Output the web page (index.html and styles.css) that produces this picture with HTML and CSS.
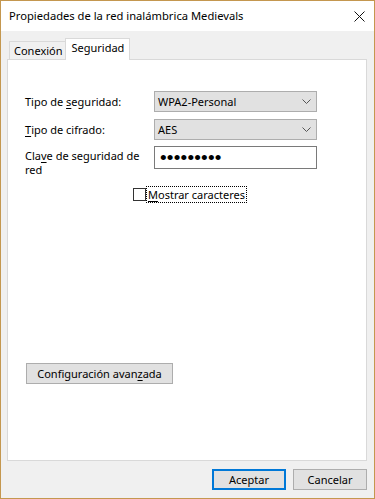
FILE: index.html
```html
<!DOCTYPE html>
<html lang="es">
<head>
    <meta charset="UTF-8">
    <meta name="viewport" content="width=device-width, initial-scale=1.0">
    <title>Propiedades de la red inalámbrica Medievals</title>
    <link rel="stylesheet" href="styles.css">
</head>
<body>
    <div class="window">
        <header class="titlebar">
            <span class="title">Propiedades de la red inalámbrica Medievals</span>
            <svg class="close" width="11" height="11" viewBox="0 0 11 11">
                <path d="M0.5 0.5 L10.5 10.5 M10.5 0.5 L0.5 10.5" stroke="#111" stroke-width="1" fill="none"/>
            </svg>
        </header>

        <div class="content">
            <nav class="tabs">
                <div class="tab">Conexión</div>
                <div class="tab active">Seguridad</div>
            </nav>

            <section class="panel">
                <div class="row">
                    <label class="label">Tipo de <u>s</u>eguridad:</label>
                    <div class="select">
                        <span>WPA2-Personal</span>
                        <svg width="9" height="5" viewBox="0 0 9 5"><path d="M0.5 0.5 L4.5 4.5 L8.5 0.5" stroke="#555" fill="none"/></svg>
                    </div>
                </div>
                <div class="row">
                    <label class="label"><u>T</u>ipo de cifrado:</label>
                    <div class="select">
                        <span>AES</span>
                        <svg width="9" height="5" viewBox="0 0 9 5"><path d="M0.5 0.5 L4.5 4.5 L8.5 0.5" stroke="#555" fill="none"/></svg>
                    </div>
                </div>
                <div class="row row-key">
                    <label class="label label-wrap">Cla<u>v</u>e de seguridad de<br>red</label>
                    <div class="password"><span class="dots">•••••••••</span></div>
                </div>

                <div class="check-row">
                    <span class="checkbox"></span>
                    <span class="check-label"><u>M</u>ostrar caracteres</span>
                </div>

                <button class="btn adv">Configuración avan<u>z</u>ada</button>
            </section>

            <footer class="actions">
                <button class="btn default">Aceptar</button>
                <button class="btn">Cancelar</button>
            </footer>
        </div>
    </div>
</body>
</html>
```

FILE: styles.css
```css
* {
    box-sizing: border-box;
}

body {
    margin: 0;
    font-family: "Segoe UI", "Noto Sans", sans-serif;
    font-size: 11px;
    color: #000;
}

u {
    text-decoration-thickness: 1px;
    text-underline-offset: 2px;
}

.window {
    width: 375px;
    height: 499px;
    border: 1px solid #c4974f;
    display: flex;
    flex-direction: column;
    background-color: #f0f0f0;
}

.titlebar {
    height: 30px;
    background-color: #fff;
    display: flex;
    align-items: center;
    justify-content: space-between;
    padding: 0 9px 1px 8px;
}

.title {
    font-size: 11.2px;
}

.close {
    margin-top: 1px;
}

.content {
    flex: 1;
    display: flex;
    flex-direction: column;
    padding: 7px 7px 0 6px;
}

/* pestañas */
.tabs {
    display: flex;
    align-items: flex-end;
    height: 21px;
    margin-left: 2px;
}

.tab {
    height: 18px;
    line-height: 17px;
    padding: 0 2px 0 4px;
    border: 1px solid #d9d9d9;
    border-bottom: none;
    border-right: none;
    background-color: #f0f0f0;
}

.tab.active {
    height: 22px;
    line-height: 18px;
    margin-bottom: -1px;
    padding: 0 5px 0 6px;
    border-right: 1px solid #d9d9d9;
    background-color: #fff;
    position: relative;
    z-index: 1;
}

.panel {
    height: 402px;
    background-color: #fff;
    border: 1px solid #d9d9d9;
    padding: 31px 0 0 17px;
    display: flex;
    flex-direction: column;
    align-items: flex-start;
}

.row {
    display: flex;
    align-items: center;
    margin-bottom: 7px;
}

.row-key {
    align-items: flex-start;
    margin-top: -1px;
}

.label {
    width: 129px;
}

.label-wrap {
    line-height: 14px;
    margin-top: 3px;
}

.select {
    width: 163px;
    height: 21px;
    background-color: #e1e1e1;
    border: 1px solid #adadad;
    display: flex;
    align-items: center;
    justify-content: space-between;
    padding: 0 5px 0 3px;
}

.password {
    width: 163px;
    height: 23px;
    border: 1px solid #7a7a7a;
    background-color: #fff;
    display: flex;
    align-items: center;
    padding-left: 5px;
}

.dots {
    font-family: "Liberation Sans", sans-serif;
    font-size: 19px;
    letter-spacing: 0.2px;
    line-height: 19px;
}

.check-row {
    display: flex;
    align-items: center;
    margin: 3px 0 0 108px;
}

.checkbox {
    width: 13px;
    height: 13px;
    border: 1px solid #333;
    background-color: #fff;
    margin-right: 1px;
}

.check-label {
    outline: 1px dotted #000;
    padding: 0 1px;
    line-height: 15px;
}

.btn {
    font-family: "Segoe UI", "Noto Sans", sans-serif;
    font-size: 11px;
    color: #000;
    height: 21px;
    padding: 0;
    background-color: #e1e1e1;
    border: 1px solid #adadad;
}

.adv {
    width: 147px;
    margin: 161px 0 0 1px;
}

.actions {
    display: flex;
    justify-content: flex-end;
    gap: 7px;
    padding-top: 8px;
}

.actions .btn {
    width: 74px;
}

.btn.default {
    border: 2px solid #0078d7;
}
```
